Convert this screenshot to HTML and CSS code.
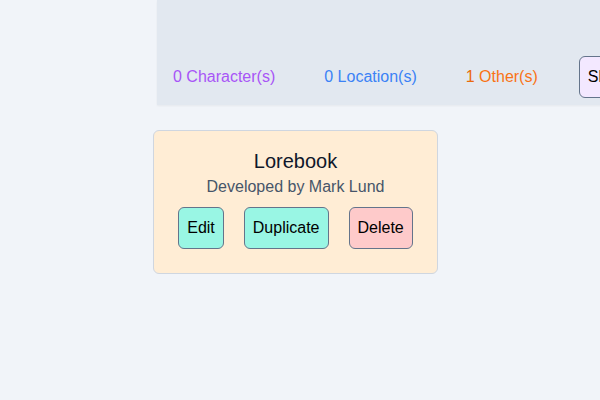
FILE: index.html
```html
<!DOCTYPE html>
<html>
<head>
<meta charset="utf-8">
<link rel="stylesheet" href="styles.css">
</head>
<body>
<div class="page">
  <div class="panel">
    <div class="stats">
      <span class="stat stat-char">0 Character(s)</span>
      <span class="stat stat-loc">0 Location(s)</span>
      <span class="stat stat-other"><span class="num">1</span> Other(s)</span>
      <button class="btn btn-purple">Show all</button>
    </div>
  </div>
  <div class="card">
    <div class="title">Lorebook</div>
    <div class="subtitle">Developed by Mark Lund</div>
    <div class="actions">
      <button class="btn btn-teal">Edit</button>
      <button class="btn btn-teal">Duplicate</button>
      <button class="btn btn-red">Delete</button>
    </div>
  </div>
</div>
</body>
</html>
```

FILE: styles.css
```css
html, body {
  margin: 0;
  padding: 0;
  overflow: hidden;
  width: 600px;
  height: 400px;
  background: #f1f4f9;
  font-family: "Liberation Sans", Arial, sans-serif;
}

.page {
  display: flex;
  flex-direction: column;
  align-items: flex-start;
}

.panel {
  margin-left: 157px;
  width: 600px;
  height: 105px;
  box-sizing: border-box;
  background: #e2e8f0;
  box-shadow: 0 1px 2px rgba(0, 0, 0, 0.05);
  display: flex;
  align-items: flex-end;
  padding: 0 0 7px 16px;
}

.stats {
  display: flex;
  align-items: center;
  gap: 49px;
  white-space: nowrap;
}

.stat {
  font-size: 16px;
  line-height: 24px;
}

.stat-char { color: #a855f7; }
.stat-loc { color: #3b82f6; }
.stat-other { color: #f97316; margin-right: -8px; }
.stat-other .num { color: #ea6a0c; }

.btn {
  font-family: "Liberation Sans", Arial, sans-serif;
  font-size: 16px;
  line-height: 24px;
  padding: 8px;
  border: 1px solid #64748b;
  border-radius: 6px;
  color: #000;
  cursor: pointer;
}

.btn-purple { background: #f3e8ff; }
.btn-teal { background: #99f6e4; }
.btn-red { background: #fecaca; }

.card {
  margin-top: 25px;
  margin-left: 153px;
  width: 285px;
  box-sizing: border-box;
  background: #ffedd5;
  border: 1px solid #cfd6e0;
  border-radius: 6px;
  padding: 16px 16px 24px;
  display: flex;
  flex-direction: column;
  align-items: center;
}

.title {
  font-size: 20px;
  line-height: 28px;
  color: #0f172a;
}

.subtitle {
  font-size: 16px;
  line-height: 24px;
  color: #475569;
}

.actions {
  margin-top: 8px;
  display: flex;
  justify-content: center;
  gap: 20px;
}
```
